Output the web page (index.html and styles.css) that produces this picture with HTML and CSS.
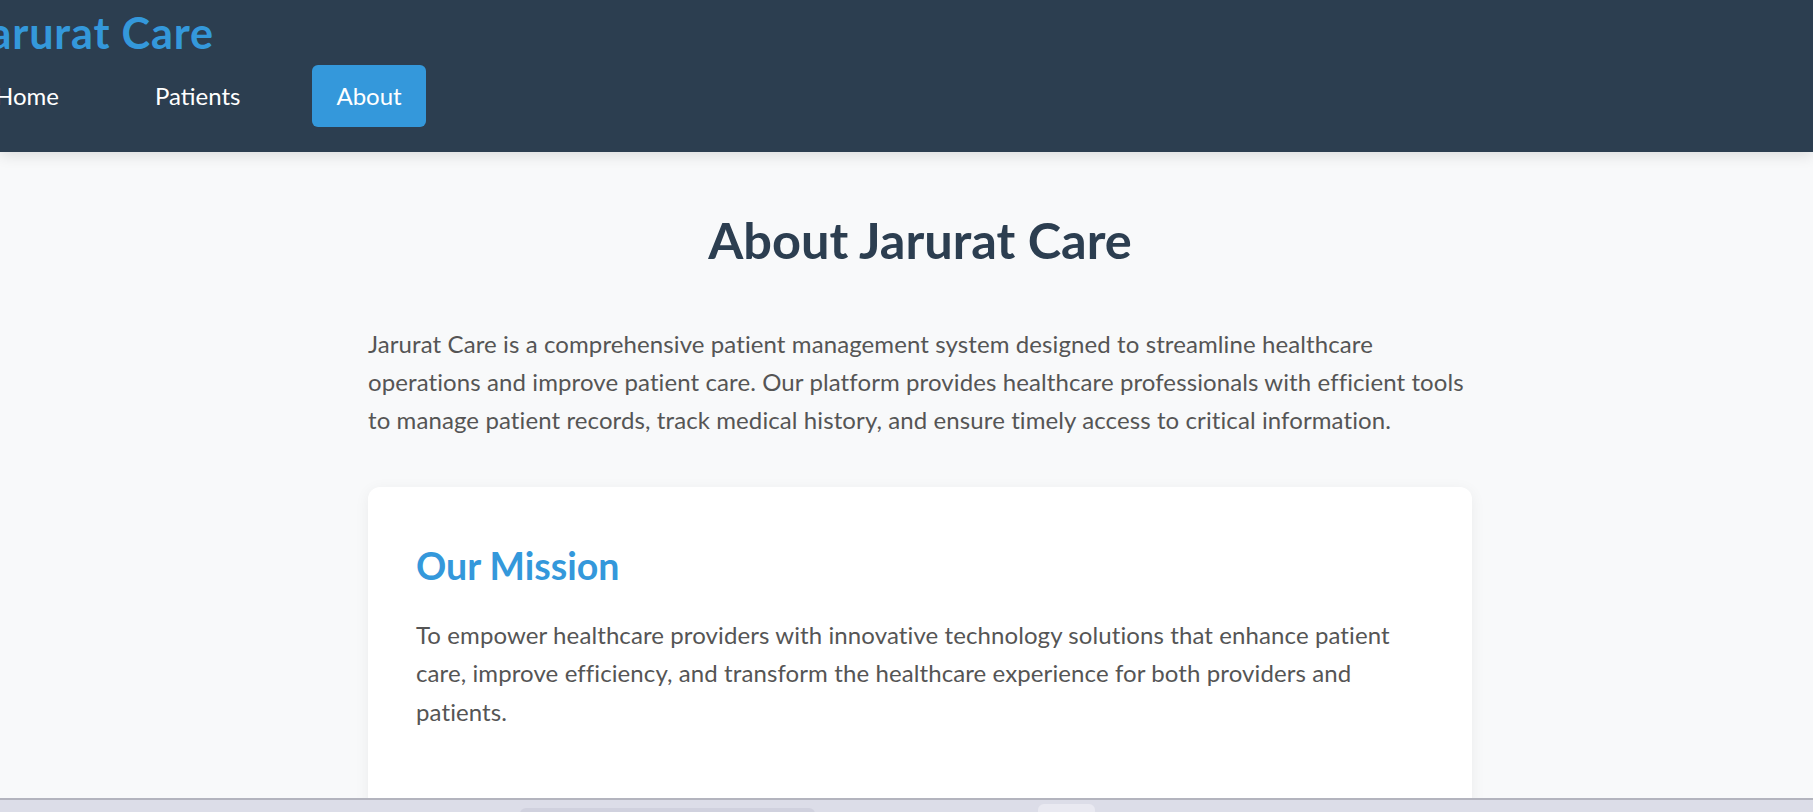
FILE: index.html
```html
<!DOCTYPE html>
<html lang="en">
<head>
<meta charset="utf-8">
<title>About - Jarurat Care</title>
<link rel="stylesheet" href="styles.css">
</head>
<body>
  <header class="site-header">
    <div class="header-inner">
      <div class="logo">Jarurat Care</div>
      <nav class="nav">
        <a class="nav-link" href="#">Home</a>
        <a class="nav-link" href="#">Patients</a>
        <a class="nav-link active" href="#">About</a>
      </nav>
    </div>
  </header>

  <main class="main">
    <div class="container">
      <h1 class="page-title">About Jarurat Care</h1>
      <p class="intro">Jarurat Care is a comprehensive patient management system designed to streamline healthcare operations and improve patient care. Our platform provides healthcare professionals with efficient tools to manage patient records, track medical history, and ensure timely access to critical information.</p>

      <section class="card">
        <h2 class="card-title">Our Mission</h2>
        <p class="card-text">To empower healthcare providers with innovative technology solutions that enhance patient care, improve efficiency, and transform the healthcare experience for both providers and patients.</p>
      </section>
    </div>
  </main>

  <div class="taskbar">
    <span class="tb-item tb-search"></span>
    <span class="tb-item tb-app"></span>
  </div>
</body>
</html>
```

FILE: styles.css
```css
* {
  box-sizing: border-box;
}

html, body {
  margin: 0;
  padding: 0;
}

body {
  font-family: "Segoe UI", Lato, "Open Sans", sans-serif;
  background: #f8f9fa;
  color: #333;
  overflow: hidden;
  height: 812px;
}

.site-header {
  background: #2c3e50;
  height: 152px;
  padding: 7px 0 24px;
  box-shadow: 0 3px 14px rgba(0, 0, 0, 0.12);
  position: relative;
  z-index: 1;
}

.header-inner {
  margin-left: -29px;
}

.logo {
  color: #3498db;
  font-size: 43.2px;
  font-weight: 700;
  line-height: 1.2;
  letter-spacing: 0.8px;
}

.nav {
  display: flex;
  gap: 48px;
  margin-top: 6px;
}

.nav-link {
  color: #fff;
  text-decoration: none;
  font-size: 24px;
  line-height: 1.6;
  padding: 12px 24px;
  border-radius: 6px;
}

.nav-link.active {
  background: #3498db;
}

.main {
  padding: 58px 0 0 27px;
}

.container {
  max-width: 1200px;
  margin: 0 auto;
  padding: 0 48px;
}

.page-title {
  margin: 0 0 54px;
  text-align: center;
  color: #2c3e50;
  font-size: 50.5px;
  line-height: 1.2;
  font-weight: 700;
}

.intro {
  margin: 0 0 47px;
  font-size: 24px;
  line-height: 1.6;
  letter-spacing: 0.1px;
  color: #555;
}

.card {
  background: #fff;
  border-radius: 12px;
  padding: 51px 48px 96px;
  box-shadow: 0 3px 15px rgba(0, 0, 0, 0.06);
}

.card-title {
  margin: 5px 0 28px;
  color: #3498db;
  font-size: 37.5px;
  line-height: 1.2;
  font-weight: 700;
}

.card-text {
  margin: 0;
  font-size: 24px;
  line-height: 1.6;
  letter-spacing: 0.1px;
  color: #555;
}

.taskbar {
  position: fixed;
  left: 0;
  right: 0;
  bottom: 0;
  height: 14px;
  background: #dcdde8;
  border-top: 2px solid #b3b4be;
  display: flex;
  align-items: flex-start;
  overflow: hidden;
  z-index: 5;
}

.tb-item {
  display: block;
  height: 20px;
  border-radius: 6px;
}

.tb-search {
  margin: 8px 0 0 520px;
  width: 295px;
  background: #d0d1de;
}

.tb-app {
  margin: 4px 0 0 223px;
  width: 57px;
  background: #e9e9f1;
}
```
